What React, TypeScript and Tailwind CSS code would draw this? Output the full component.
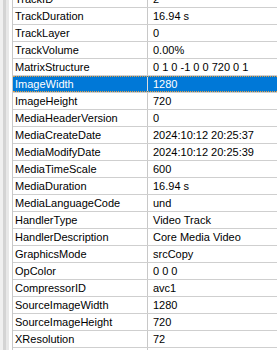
const rows: [string, string][] = [
  ['TrackID', '2'],
  ['TrackDuration', '16.94 s'],
  ['TrackLayer', '0'],
  ['TrackVolume', '0.00%'],
  ['MatrixStructure', '0 1 0 -1 0 0 720 0 1'],
  ['ImageWidth', '1280'],
  ['ImageHeight', '720'],
  ['MediaHeaderVersion', '0'],
  ['MediaCreateDate', '2024:10:12 20:25:37'],
  ['MediaModifyDate', '2024:10:12 20:25:39'],
  ['MediaTimeScale', '600'],
  ['MediaDuration', '16.94 s'],
  ['MediaLanguageCode', 'und'],
  ['HandlerType', 'Video Track'],
  ['HandlerDescription', 'Core Media Video'],
  ['GraphicsMode', 'srcCopy'],
  ['OpColor', '0 0 0'],
  ['CompressorID', 'avc1'],
  ['SourceImageWidth', '1280'],
  ['SourceImageHeight', '720'],
  ['XResolution', '72'],
  ['', ''],
];

const selected = 'ImageWidth';

export default function App() {
  return (
    <div
      className="flex h-[350px] w-[277px] overflow-hidden bg-white text-[11px] text-black"
      style={{ fontFamily: '"Liberation Sans", Arial, sans-serif' }}
    >
      {/* left splitter strip */}
      <div className="flex w-[9px] shrink-0">
        <div className="w-[3px] bg-[#f0f0f0]" />
        <div className="w-[3px] bg-[#d4d4d4]" />
        <div className="w-[3px] bg-[#e8e8e8]" />
      </div>
      <div className="w-[3px] shrink-0 bg-white" />

      {/* property list */}
      <div className="flex-1 border-l border-[#c8c8c8]">
        <div className="-mt-[9px]">
          {rows.map(([name, value], i) => {
            const isSel = name === selected;
            return (
              <div key={i} className="h-[17px] border-b border-[#cfcfcf]">
                <div
                  className={
                    isSel
                      ? 'flex h-[16px] border-y border-dotted border-[#e8a040] bg-[#0078d7] text-white'
                      : 'flex h-[16px]'
                  }
                >
                  <div
                    className={
                      isSel
                        ? 'w-[135px] shrink-0 border-r border-[#dcdcdc] pl-[2px] leading-[14px]'
                        : 'w-[135px] shrink-0 border-r border-[#c8c8c8] pl-[2px] pt-px leading-[15px]'
                    }
                  >
                    {name}
                  </div>
                  <div
                    className={
                      isSel
                        ? 'whitespace-nowrap pl-[5px] leading-[14px]'
                        : 'whitespace-nowrap pl-[5px] pt-px leading-[15px]'
                    }
                  >
                    {value}
                  </div>
                </div>
              </div>
            );
          })}
        </div>
      </div>
    </div>
  );
}
